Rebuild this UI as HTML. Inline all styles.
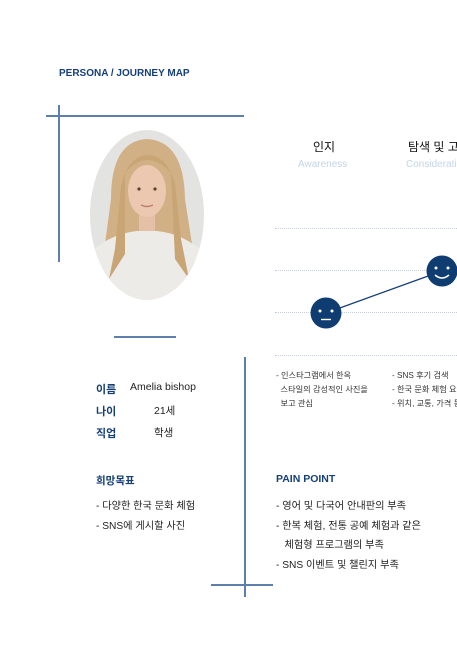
<!DOCTYPE html>
<html><head><meta charset="utf-8"><style>
*{margin:0;padding:0;box-sizing:border-box}
body{width:457px;height:646px;background:#fff;position:relative;overflow:hidden;font-family:"Liberation Sans","Noto Sans CJK KR",sans-serif;color:#1e2a3a}
.a{position:absolute;white-space:nowrap}
.l{position:absolute;background:#5b80ab}
.b{color:#163f78;font-weight:bold}
.dot{position:absolute;left:275px;width:182px;border-top:1px dotted #c9ced6}
.s{font-size:8.2px;color:#333;line-height:14px}
.m{font-size:10.5px;color:#222}
</style></head><body>
<div class="a b" style="left:59px;top:68px;font-size:10px">PERSONA / JOURNEY MAP</div>
<div class="l" style="left:46px;top:115px;width:198px;height:1.5px"></div>
<div class="l" style="left:58px;top:105px;width:1.5px;height:157px"></div>
<svg class="a" style="left:89px;top:129px" width="116" height="172" viewBox="0 0 116 172">
<defs><clipPath id="c"><ellipse cx="58" cy="86" rx="57" ry="85"/></clipPath></defs>
<g clip-path="url(#c)">
<rect width="116" height="172" fill="#e3e4e2"/>
<path d="M22 70 Q22 12 58 10 Q95 12 96 70 L110 160 L10 160Z" fill="#d1b086"/>
<rect x="50" y="80" width="16" height="24" fill="#e6c0a6"/>
<path d="M0 125 Q20 105 48 102 L68 102 Q96 105 116 125 L116 172 L0 172Z" fill="#ecebe8"/>
<ellipse cx="58" cy="62" rx="19" ry="26" fill="#ecc8b0"/>
<path d="M36 44 Q58 18 82 44 L86 130 L100 150 L92 110 L86 55 Q78 26 58 26 Q38 28 32 58 L26 120 L20 150 L36 125Z" fill="#c9a475"/>
<circle cx="50" cy="60" r="1.6" fill="#5a4030"/><circle cx="66" cy="60" r="1.6" fill="#5a4030"/>
<path d="M52 76 Q58 79 64 76" stroke="#c07f70" stroke-width="1.5" fill="none"/>
</g></svg>
<div class="l" style="left:114px;top:336px;width:62px;height:1.5px"></div>
<div class="l" style="left:244px;top:357px;width:1.5px;height:240px"></div>
<div class="l" style="left:211px;top:584px;width:62px;height:1.5px"></div>

<div class="a" style="left:313px;top:138px;font-size:12px;color:#111">인지</div>
<div class="a" style="left:298px;top:159px;font-size:10px;color:#c5d4e8">Awareness</div>
<div class="a" style="left:408px;top:138px;font-size:12px;color:#111">탐색 및 고려</div>
<div class="a" style="left:406px;top:159px;font-size:10px;color:#c5d4e8">Consideration</div>
<div class="dot" style="top:228px"></div>
<div class="dot" style="top:270px"></div>
<div class="dot" style="top:312px"></div>
<div class="dot" style="top:355px"></div>
<svg class="a" style="left:0;top:0" width="457" height="646">
<line x1="326" y1="313" x2="442" y2="271" stroke="#163f78" stroke-width="1.3"/>
<circle cx="326" cy="313" r="15.5" fill="#0f3d72"/>
<circle cx="320" cy="311" r="1.5" fill="#fff"/><circle cx="332" cy="311" r="1.5" fill="#fff"/>
<line x1="321" y1="319.5" x2="331" y2="319.5" stroke="#fff" stroke-width="1.4"/>
<circle cx="442" cy="271" r="15.5" fill="#0f3d72"/>
<circle cx="436" cy="268" r="1.5" fill="#fff"/><circle cx="448" cy="268" r="1.5" fill="#fff"/>
<path d="M435 275 Q442 281 449 275" stroke="#fff" stroke-width="1.5" fill="none"/>
</svg>
<div class="a s" style="left:276px;top:369px">- 인스타그램에서 한옥<br>&nbsp;&nbsp;스타일의 감성적인 사진을<br>&nbsp;&nbsp;보고 관심</div>
<div class="a s" style="left:392px;top:369px">- SNS 후기 검색<br>- 한국 문화 체험 요금<br>- 위치, 교통, 가격 등</div>

<div class="a b" style="left:96px;top:381px;font-size:11px">이름</div>
<div class="a m" style="left:130px;top:381px">Amelia bishop</div>
<div class="a b" style="left:96px;top:403px;font-size:11px">나이</div>
<div class="a m" style="left:154px;top:403px">21세</div>
<div class="a b" style="left:96px;top:425px;font-size:11px">직업</div>
<div class="a m" style="left:154px;top:425px">학생</div>

<div class="a b" style="left:96px;top:473px;font-size:10.5px">희망목표</div>
<div class="a m" style="left:96px;top:497px;font-size:10.2px;line-height:20px">- 다양한 한국 문화 체험<br>- SNS에 게시할 사진</div>

<div class="a b" style="left:276px;top:473px;font-size:10.5px">PAIN POINT</div>
<div class="a m" style="left:276px;top:497px;font-size:10.2px;line-height:19.7px">- 영어 및 다국어 안내판의 부족<br>- 한복 체험, 전통 공예 체험과 같은<br>&nbsp;&nbsp;&nbsp;체험형 프로그램의 부족<br>- SNS 이벤트 및 챌린지 부족</div>
</body></html>
